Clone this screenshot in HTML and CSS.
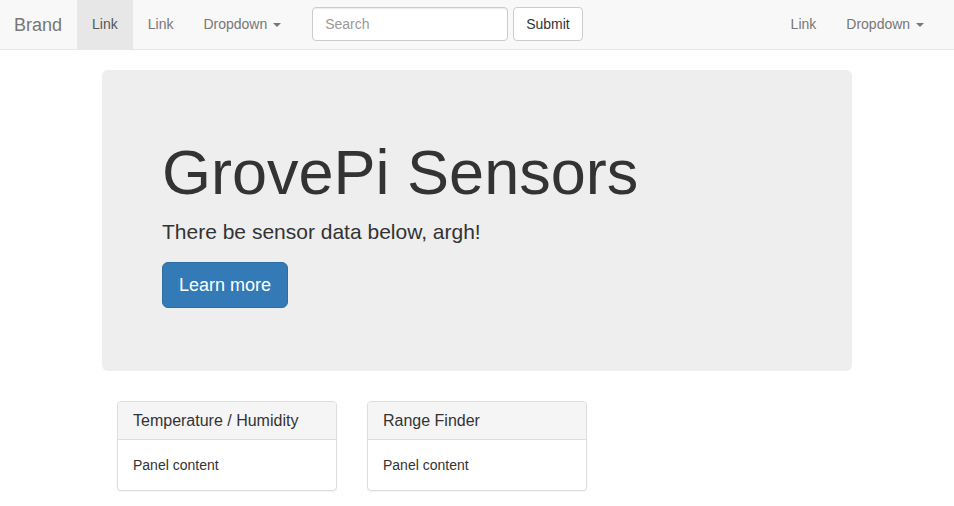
FILE: index.html
```html
<!DOCTYPE html>
<html lang="en">
<head>
<meta charset="utf-8">
<title>GrovePi Sensors</title>
<link rel="stylesheet" href="styles.css">
</head>
<body>
<nav class="navbar">
  <div class="navbar-left">
    <a class="brand" href="#">Brand</a>
    <ul class="nav">
      <li class="active"><a href="#">Link</a></li>
      <li><a href="#">Link</a></li>
      <li><a href="#">Dropdown <span class="caret"></span></a></li>
    </ul>
    <form class="navbar-form">
      <input class="form-control" type="text" placeholder="Search">
      <button class="btn btn-default" type="button">Submit</button>
    </form>
  </div>
  <ul class="nav nav-right">
    <li><a href="#">Link</a></li>
    <li><a href="#">Dropdown <span class="caret"></span></a></li>
  </ul>
</nav>
<div class="container">
  <div class="jumbotron">
    <h1>GrovePi Sensors</h1>
    <p>There be sensor data below, argh!</p>
    <p class="btn-wrap"><a class="btn btn-primary btn-lg" href="#">Learn more</a></p>
  </div>
  <div class="row">
    <div class="col">
      <div class="panel">
        <div class="panel-heading">Temperature / Humidity</div>
        <div class="panel-body">Panel content</div>
      </div>
    </div>
    <div class="col">
      <div class="panel">
        <div class="panel-heading">Range Finder</div>
        <div class="panel-body">Panel content</div>
      </div>
    </div>
  </div>
</div>
</body>
</html>
```

FILE: styles.css
```css
* { box-sizing: border-box; }
html, body { margin: 0; }
body {
  font-family: "Liberation Sans", Arial, Helvetica, sans-serif;
  font-size: 14px;
  line-height: 1.42857143;
  color: #333;
  background: #fff;
}
a { text-decoration: none; }

.navbar {
  display: flex;
  justify-content: space-between;
  height: 50px;
  background: #f8f8f8;
  border-bottom: 1px solid #e7e7e7;
  margin-bottom: 20px;
}
.navbar-left { display: flex; align-items: flex-start; }
.brand {
  display: block;
  padding: 15px 15px 15px 14px;
  font-size: 18px;
  line-height: 20px;
  height: 49px;
  color: #777;
}
.nav {
  display: flex;
  list-style: none;
  margin: 0;
  padding: 0;
}
.nav li a {
  display: block;
  padding: 15px;
  line-height: 19px;
  height: 49px;
  color: #777;
}
.nav li.active a { background: #e7e7e7; color: #555; }
.caret {
  display: inline-block;
  width: 0;
  height: 0;
  margin-left: 2px;
  vertical-align: middle;
  border-top: 4px solid;
  border-left: 4px solid transparent;
  border-right: 4px solid transparent;
}
.navbar-form {
  display: flex;
  gap: 5px;
  margin: 7px 0 0;
  padding: 0 15px 0 16px;
}
.form-control {
  width: 196px;
  height: 34px;
  padding: 6px 12px;
  font-family: inherit;
  font-size: 14px;
  color: #555;
  background: #fff;
  border: 1px solid #ccc;
  border-radius: 4px;
  box-shadow: inset 0 1px 1px rgba(0,0,0,.075);
}
.form-control::placeholder { color: #999; }
.btn {
  display: inline-block;
  font-family: inherit;
  font-size: 14px;
  line-height: 1.42857143;
  padding: 6px 12px;
  border: 1px solid transparent;
  border-radius: 4px;
  cursor: pointer;
}
.btn-default { color: #333; background: #fff; border-color: #ccc; height: 34px; }
.nav-right { margin-right: 15px; }

.container {
  width: 750px;
  margin: 0 auto;
  padding: 0 15px;
}
.jumbotron {
  margin: 0 -15px 30px;
  padding: 48px 60px;
  background: #eee;
  border-radius: 6px;
}
.jumbotron h1 {
  margin: 20px 0 10px;
  font-size: 63px;
  line-height: 1.1;
  font-weight: 500;
  color: #333;
}
.jumbotron p {
  margin: 0 0 15px;
  font-size: 21px;
  font-weight: 200;
}
.jumbotron .btn-wrap { margin-bottom: 15px; line-height: 0; }
.btn-primary { color: #fff; background: #337ab7; border-color: #2e6da4; }
.btn-lg {
  padding: 10px 16px;
  font-size: 18px;
  line-height: 1.3333333;
  border-radius: 6px;
}

.row {
  display: flex;
  margin: 0 -15px;
}
.col {
  width: 250px;
  padding: 0 15px;
}
.panel {
  background: #fff;
  border: 1px solid #ddd;
  border-radius: 4px;
  box-shadow: 0 1px 1px rgba(0,0,0,.05);
  margin-bottom: 20px;
}
.panel-heading {
  padding: 10px 15px;
  font-size: 16px;
  line-height: 17px;
  background: #f5f5f5;
  border-bottom: 1px solid #ddd;
  border-radius: 3px 3px 0 0;
}
.panel-body { padding: 15px; }
```
